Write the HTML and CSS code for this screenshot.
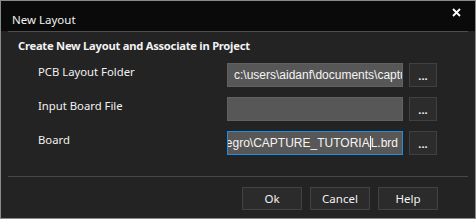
FILE: index.html
```html
<!DOCTYPE html>
<html>
<head>
<meta charset="utf-8">
<link rel="stylesheet" href="styles.css">
</head>
<body>
<div class="window">
  <div class="titlebar">
    <span class="title">New Layout</span>
    <svg class="close" width="9" height="9" viewBox="0 0 9 9"><path d="M1 1L8 8M8 1L1 8" stroke="#ffffff" stroke-width="1.8" fill="none"/></svg>
  </div>
  <div class="sep"></div>
  <div class="heading">Create New Layout and Associate in Project</div>
  <div class="rows">
    <div class="label">PCB Layout Folder</div>
    <div class="field"><span class="text left">c:\users\aidanf\documents\capture\allegro</span></div>
    <div class="browse">...</div>
    <div class="label">Input Board File</div>
    <div class="field"></div>
    <div class="browse">...</div>
    <div class="label">Board</div>
    <div class="field focus"><span class="text right"><span class="inner">c:\users\aidanf\documents\capture\allegro\CAPTURE_TUTORIA<span class="caret"></span>L.brd</span></span></div>
    <div class="browse">...</div>
  </div>
  <div class="sep bottom"></div>
  <div class="buttons">
    <div class="btn">Ok</div>
    <div class="btn">Cancel</div>
    <div class="btn">Help</div>
  </div>
</div>
</body>
</html>
```
FILE: styles.css
```css
html, body { margin: 0; padding: 0; background: #222322; }
.window {
  width: 476px; height: 219px; box-sizing: border-box;
  border: 1px solid #8a8a8a;
  background: #222322;
  font-family: "Noto Sans", "DejaVu Sans", sans-serif;
  font-size: 11px; color: #f2f2f2;
  overflow: hidden;
}
.titlebar {
  height: 30px; background: #0a0a0a;
  display: flex; align-items: center; justify-content: space-between;
  padding: 0 14px 0 11px;
}
.title { font-size: 11.5px; margin-top: 6px; }
.close { align-self: flex-start; margin-top: 7px; }
.sep { height: 1px; background: #4d4d4d; margin: 0 7px; }
.sep.bottom { margin-top: 21px; background: #474747; }
.heading {
  font-weight: bold; line-height: 16px; padding: 6px 0 0 17px;
  font-size: 11.2px; letter-spacing: -0.25px;
}
.rows {
  margin-top: 9px;
  display: grid;
  grid-template-columns: 183px 176px 28px;
  column-gap: 6px; row-gap: 10px;
  padding-left: 37px;
  grid-auto-rows: 24px;
}
.label { line-height: 18px; font-size: 11.3px; }
.field {
  box-sizing: border-box; border: 1px solid #616161; background: #575757;
  overflow: hidden; display: flex; align-items: center; min-width: 0;
  font-family: "Liberation Sans", Arial, sans-serif; font-size: 12px; color: #f4f4f4;
  white-space: nowrap;
}
.field.focus { border-color: #1e8fe6; }
.text { flex: 1 1 auto; min-width: 0; overflow: hidden; display: flex; }
.text.left { padding-left: 6px; }
.text.right { padding-right: 4px; justify-content: flex-end; }
.inner { flex: none; }
.caret { display: inline-block; width: 1px; height: 14px; background: #f4f4f4; vertical-align: -3px; }
.browse {
  box-sizing: border-box; border: 1px solid #404040; background: #2c2c2c;
  display: flex; justify-content: center; align-items: flex-end;
  font-size: 11px; line-height: 16px; padding-bottom: 2px; font-weight: bold;
}
.buttons {
  margin-top: 10px; display: flex; justify-content: flex-end; gap: 8px;
  padding-right: 37px;
}
.btn {
  box-sizing: border-box; width: 60px; height: 23px;
  border: 1px solid #434343; background: #2b2b2b;
  display: flex; align-items: center; justify-content: center;
  font-size: 11.5px;
}
```
